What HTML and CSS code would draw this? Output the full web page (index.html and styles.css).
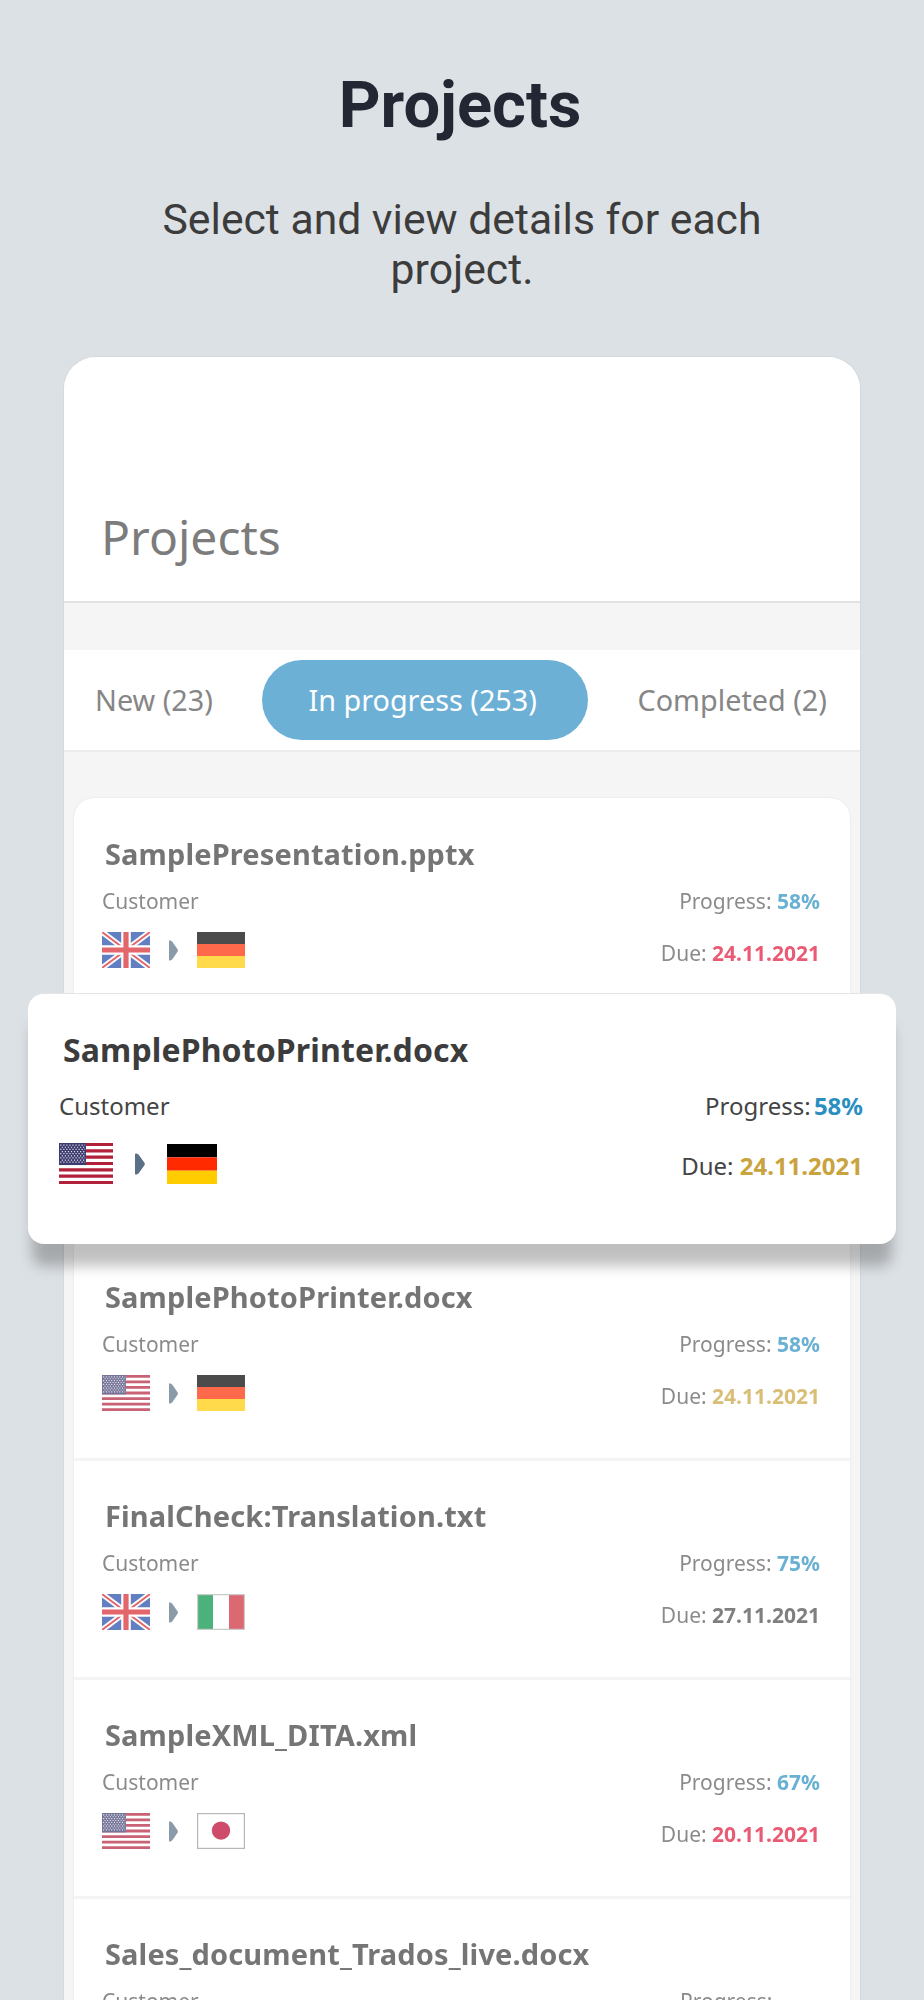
FILE: index.html
```html
<!DOCTYPE html>
<html lang="en">
<head>
<meta charset="utf-8">
<title>Projects</title>
<link rel="stylesheet" href="styles.css">
</head>
<body>
<svg class="defs" width="0" height="0" aria-hidden="true">
  <defs>
    <symbol id="flag-gb" viewBox="0 0 60 45" preserveAspectRatio="none">
      <rect width="60" height="45" fill="#1f4aa8"/>
      <path d="M0 0L60 45M60 0L0 45" stroke="#fff" stroke-width="7"/>
      <path d="M0 0L60 45M60 0L0 45" stroke="#d8262c" stroke-width="2.4"/>
      <path d="M30 0V45M0 22.500H60" stroke="#fff" stroke-width="12"/>
      <path d="M30 0V45M0 22.500H60" stroke="#d8262c" stroke-width="6.500"/>
    </symbol>
    <symbol id="flag-de" viewBox="0 0 60 45" preserveAspectRatio="none">
      <rect width="60" height="15" fill="#000"/>
      <rect y="15" width="60" height="15" fill="#ff2a00"/>
      <rect y="30" width="60" height="15" fill="#ffcc00"/>
    </symbol>
    <symbol id="flag-us" viewBox="0 0 64 48" preserveAspectRatio="none">
      <rect width="64" height="48" fill="#fff"/>
      <path d="M0 1.800H64M0 9.200H64M0 16.600H64M0 24H64M0 31.400H64M0 38.800H64M0 46.200H64" stroke="#b2213a" stroke-width="3.700"/>
      <rect width="32" height="25.800" fill="#3c3b6e"/>
      <path d="M1.500 2.500H31M1.500 7.500H31M1.500 12.500H31M1.500 17.500H31M1.500 22.500H31" stroke="#e4e4f0" stroke-width="1.400" stroke-dasharray="1.400 2.200"/>
      <path d="M3.300 5H31M3.300 10H31M3.300 15H31M3.300 20H31" stroke="#e4e4f0" stroke-width="1.400" stroke-dasharray="1.400 2.200"/>
    </symbol>
    <symbol id="flag-it" viewBox="0 0 60 45" preserveAspectRatio="none">
      <rect width="60" height="45" fill="#fff"/>
      <rect width="20" height="45" fill="#009246"/>
      <rect x="40" width="20" height="45" fill="#ce2b37"/>
      <rect x="0.750" y="0.750" width="58.500" height="43.500" fill="none" stroke="#b5b5b5" stroke-width="1.500"/>
    </symbol>
    <symbol id="flag-jp" viewBox="0 0 60 45" preserveAspectRatio="none">
      <rect width="60" height="45" fill="#fff"/>
      <circle cx="30" cy="22" r="11.500" fill="#bc002d"/>
      <rect x="0.750" y="0.750" width="58.500" height="43.500" fill="none" stroke="#9a9a9a" stroke-width="1.500"/>
    </symbol>
    <symbol id="chev" viewBox="0 0 10 22" preserveAspectRatio="none">
      <path d="M0 1.500Q0 0 1.500 0.500L3.500 1.500L9.600 10Q10 11 9.600 12L3.500 20.500L1.500 21.500Q0 22 0 20.500Z" fill="#5a7086"/>
    </symbol>
  </defs>
</svg>

<header class="intro">
  <h1 class="intro-title">Projects</h1>
  <p class="intro-text">Select and view details for each project.</p>
</header>

<main class="panel">
  <div class="panel-head"><h2 class="panel-title">Projects</h2></div>
  <nav class="tabs">
    <span class="tab">New (23)</span>
    <span class="tab tab-active">In progress (253)</span>
    <span class="tab">Completed (2)</span>
  </nav>

  <section class="rows">
    <article class="row row-first">
      <div class="row-body">
        <h3 class="row-title">SamplePresentation.pptx</h3>
        <div class="row-meta">
          <div class="meta-left">
            <div>Customer</div>
            <div class="langs">
              <svg class="flag"><use href="#flag-gb"/></svg>
              <svg class="chev"><use href="#chev"/></svg>
              <svg class="flag"><use href="#flag-de"/></svg>
            </div>
          </div>
          <div class="meta-right">
            <div>Progress: <b class="pct">58%</b></div>
            <div class="due">Due: <b class="late">24.11.2021</b></div>
          </div>
        </div>
      </div>
    </article>

    <article class="row">
      <div class="row-body">
        <h3 class="row-title">SamplePhotoPrinter.docx</h3>
        <div class="row-meta">
          <div class="meta-left">
            <div>Customer</div>
            <div class="langs">
              <svg class="flag"><use href="#flag-us"/></svg>
              <svg class="chev"><use href="#chev"/></svg>
              <svg class="flag"><use href="#flag-de"/></svg>
            </div>
          </div>
          <div class="meta-right">
            <div>Progress: <b class="pct">58%</b></div>
            <div class="due">Due: <b class="soon">24.11.2021</b></div>
          </div>
        </div>
      </div>
    </article>

    <article class="row">
      <div class="row-body">
        <h3 class="row-title">FinalCheck:Translation.txt</h3>
        <div class="row-meta">
          <div class="meta-left">
            <div>Customer</div>
            <div class="langs">
              <svg class="flag"><use href="#flag-gb"/></svg>
              <svg class="chev"><use href="#chev"/></svg>
              <svg class="flag"><use href="#flag-it"/></svg>
            </div>
          </div>
          <div class="meta-right">
            <div>Progress: <b class="pct">75%</b></div>
            <div class="due">Due: <b class="ok">27.11.2021</b></div>
          </div>
        </div>
      </div>
    </article>

    <article class="row">
      <div class="row-body">
        <h3 class="row-title">SampleXML_DITA.xml</h3>
        <div class="row-meta">
          <div class="meta-left">
            <div>Customer</div>
            <div class="langs">
              <svg class="flag"><use href="#flag-us"/></svg>
              <svg class="chev"><use href="#chev"/></svg>
              <svg class="flag"><use href="#flag-jp"/></svg>
            </div>
          </div>
          <div class="meta-right">
            <div>Progress: <b class="pct">67%</b></div>
            <div class="due">Due: <b class="late">20.11.2021</b></div>
          </div>
        </div>
      </div>
    </article>

    <article class="row">
      <div class="row-body">
        <h3 class="row-title">Sales_document_Trados_live.docx</h3>
        <div class="row-meta">
          <div class="meta-left">
            <div>Customer</div>
          </div>
          <div class="meta-right meta-wrap">
            <div>Progress:</div>
          </div>
        </div>
      </div>
    </article>
  </section>
</main>

<aside class="float-card">
  <h3 class="float-title">SamplePhotoPrinter.docx</h3>
  <div class="float-meta">
    <div class="meta-left">
      <div>Customer</div>
      <div class="float-langs">
        <svg class="float-flag-us"><use href="#flag-us"/></svg>
        <svg class="float-chev"><use href="#chev"/></svg>
        <svg class="float-flag-de"><use href="#flag-de"/></svg>
      </div>
    </div>
    <div class="meta-right">
      <div class="float-progress">Progress: <b class="pct">58%</b></div>
      <div class="float-due">Due: <b class="soon">24.11.2021</b></div>
    </div>
  </div>
</aside>
</body>
</html>
```
FILE: styles.css
```css
* { box-sizing: border-box; }
html, body { margin: 0; height: 2000px; overflow: hidden; }
body {
  position: relative;
  background: #dce1e5;
  font-family: "Noto Sans", "Open Sans", sans-serif;
}
.defs { position: absolute; }

.intro { height: 357px; padding: 65px 100px 0; text-align: center; font-family: Roboto, sans-serif; }
.intro-title { margin: 0; padding-right: 4px; font-size: 65px; line-height: 80px; font-weight: 700; color: #232733; }
.intro-text { margin: 49px 0 0; font-size: 42.700px; line-height: 50px; font-weight: 400; color: #3c3c3c; }

.panel {
  margin: 0 64px;
  height: 1643px;
  background: #f5f5f5;
  border-radius: 32px 32px 0 0;
  overflow: hidden;
  box-shadow: 0 0 2px rgba(0,0,0,.12);
}
.panel-head {
  height: 246px;
  padding: 148px 37px 0;
  background: #fff;
  border-bottom: 2px solid #e2e2e2;
}
.panel-title { margin: 0; font-size: 48px; line-height: 64px; font-weight: 400; color: #7c7c7c; }

.tabs {
  margin-top: 47px;
  height: 102px;
  padding: 10px 33px 0 31px;
  display: flex;
  justify-content: space-between;
  align-items: flex-start;
  background: #fff;
  border-bottom: 2px solid #ececec;
  font-size: 28.800px;
  color: #868686;
}
.tab { height: 80px; line-height: 80px; }
.tab-active {
  width: 326px;
  padding-right: 5px;
  text-align: center;
  background: #6cb0d6;
  color: #fff;
  border-radius: 40px;
}

.rows { margin: 46px 10px 0; background: #fff; border-radius: 20px 20px 0 0; box-shadow: 0 0 2px rgba(0,0,0,.1); }
.row { height: 219px; border-bottom: 3px solid #f4f4f4; padding: 0 30px 0 28px; }
.row-first { height: 444px; padding-top: 1px; }
.row-body { opacity: .7; filter: blur(.5px); }

.row-title { margin: 0; padding: 37px 0 0 3px; font-size: 29px; letter-spacing: .13px; line-height: 36px; font-weight: 700; color: #3c3c3c; }
.row-meta { display: flex; justify-content: space-between; font-size: 21px; line-height: 30px; color: #5a5a5a; margin-top: 14px; }
.langs { display: flex; align-items: center; margin-top: 16px; }
.flag { width: 48px; height: 36px; display: block; }
.chev { width: 9px; height: 21px; margin: 0 19px; display: block; }
.meta-right { text-align: right; }
.due { margin-top: 22px; }
.meta-wrap { width: 140px; text-align: left; }

b { font-weight: 700; }
.pct { color: #2a8fc0; }
.late { color: #e0173a; }
.soon { color: #c9a33e; }
.ok { color: #4a4a4a; }

.float-card {
  position: absolute;
  left: 28px;
  top: 993px;
  width: 868px;
  height: 251px;
  padding: 36px 33px 0 31px;
  background: #fff;
  border-radius: 16px;
  border-top: 1px solid #e4e4e4;
  box-shadow: 0 26px 14px -4px rgba(0,0,0,.25);
  color: #444;
}
.float-title { margin: 0; padding-left: 4px; font-size: 32px; letter-spacing: .13px; line-height: 40px; font-weight: 700; color: #3c3c3c; }
.float-meta { display: flex; justify-content: space-between; font-size: 24px; line-height: 34px; margin-top: 19px; }
.float-langs { display: flex; align-items: center; margin-top: 20px; }
.float-flag-us { width: 54px; height: 41px; display: block; }
.float-flag-de { width: 50px; height: 40px; display: block; }
.float-chev { width: 10px; height: 22px; margin: 0 22px; display: block; }
.float-progress { word-spacing: -3px; }
.float-due { margin-top: 26px; }
```
